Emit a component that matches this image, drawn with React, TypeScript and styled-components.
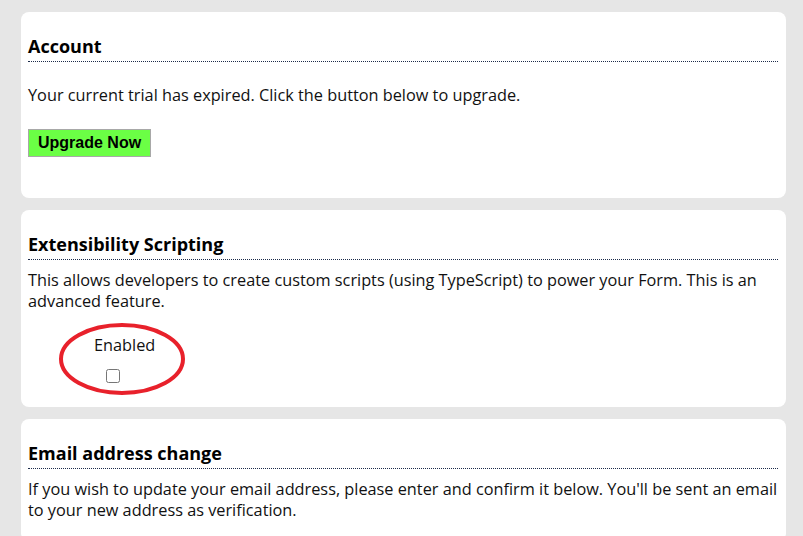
import React from "react";
import styled, { createGlobalStyle } from "styled-components";

const Global = createGlobalStyle`
  html, body { margin: 0; padding: 0; background: #e6e6e6; }
  body { font-family: "Open Sans", "Liberation Sans", sans-serif; color: #111; }
`;

const Page = styled.div`
  display: flex;
  flex-direction: column;
  gap: 12px;
  padding: 12px 17px 0 21px;
  height: 536px;
  box-sizing: border-box;
  overflow: hidden;
`;

const Card = styled.section<{ $pb?: number }>`
  background: #fff;
  border-radius: 8px;
  padding: 0 8px ${(p) => p.$pb ?? 0}px 7px;
  flex-shrink: 0;
`;

const Heading = styled.h2`
  margin: 22px 0 0;
  padding-bottom: 3px;
  border-bottom: 1px dotted #1c2b4a;
  font-size: 18px;
  line-height: 24px;
  font-weight: 700;
  color: #000;
`;

const Text = styled.p<{ $mt: number }>`
  margin: ${(p) => p.$mt}px 0 0;
  font-size: 16.3px;
  line-height: 21px;
  color: #111;
`;

const UpgradeButton = styled.button`
  margin-top: 23px;
  height: 28px;
  padding: 0 9px;
  background: #6bff45;
  border: 1px solid #a8a8a8;
  font-family: "Liberation Sans", Arial, sans-serif;
  font-weight: 700;
  font-size: 16px;
  color: #000;
  display: block;
`;

const Field = styled.div`
  position: relative;
  margin: 23px 0 0 66px;
  width: 62px;
  display: flex;
  flex-direction: column;
  align-items: flex-start;
`;

const FieldLabel = styled.label`
  font-size: 16.3px;
  line-height: 21px;
  color: #111;
`;

const Check = styled.input`
  margin: 13px 0 0 12px;
  width: 14px;
  height: 14px;
`;

const Ring = styled.svg`
  position: absolute;
  left: -35px;
  top: -12px;
  width: 126px;
  height: 72px;
  overflow: visible;
  pointer-events: none;
`;

export default function App() {
  return (
    <>
      <Global />
      <Page>
        <Card $pb={41}>
          <Heading>Account</Heading>
          <Text $mt={23}>Your current trial has expired. Click the button below to upgrade.</Text>
          <UpgradeButton>Upgrade Now</UpgradeButton>
        </Card>
        <Card $pb={24}>
          <Heading>Extensibility Scripting</Heading>
          <Text $mt={10}>
            This allows developers to create custom scripts (using TypeScript) to power your Form. This is an
            advanced feature.
          </Text>
          <Field>
            <FieldLabel>Enabled</FieldLabel>
            <Check type="checkbox" />
            <Ring viewBox="0 0 126 72">
              <ellipse cx="63" cy="36" rx="61" ry="34" fill="none" stroke="#e8212b" strokeWidth="4" />
            </Ring>
          </Field>
        </Card>
        <Card $pb={20}>
          <Heading>Email address change</Heading>
          <Text $mt={10}>
            If you wish to update your email address, please enter and confirm it below. You'll be sent an email
            to your new address as verification.
          </Text>
        </Card>
      </Page>
    </>
  );
}
